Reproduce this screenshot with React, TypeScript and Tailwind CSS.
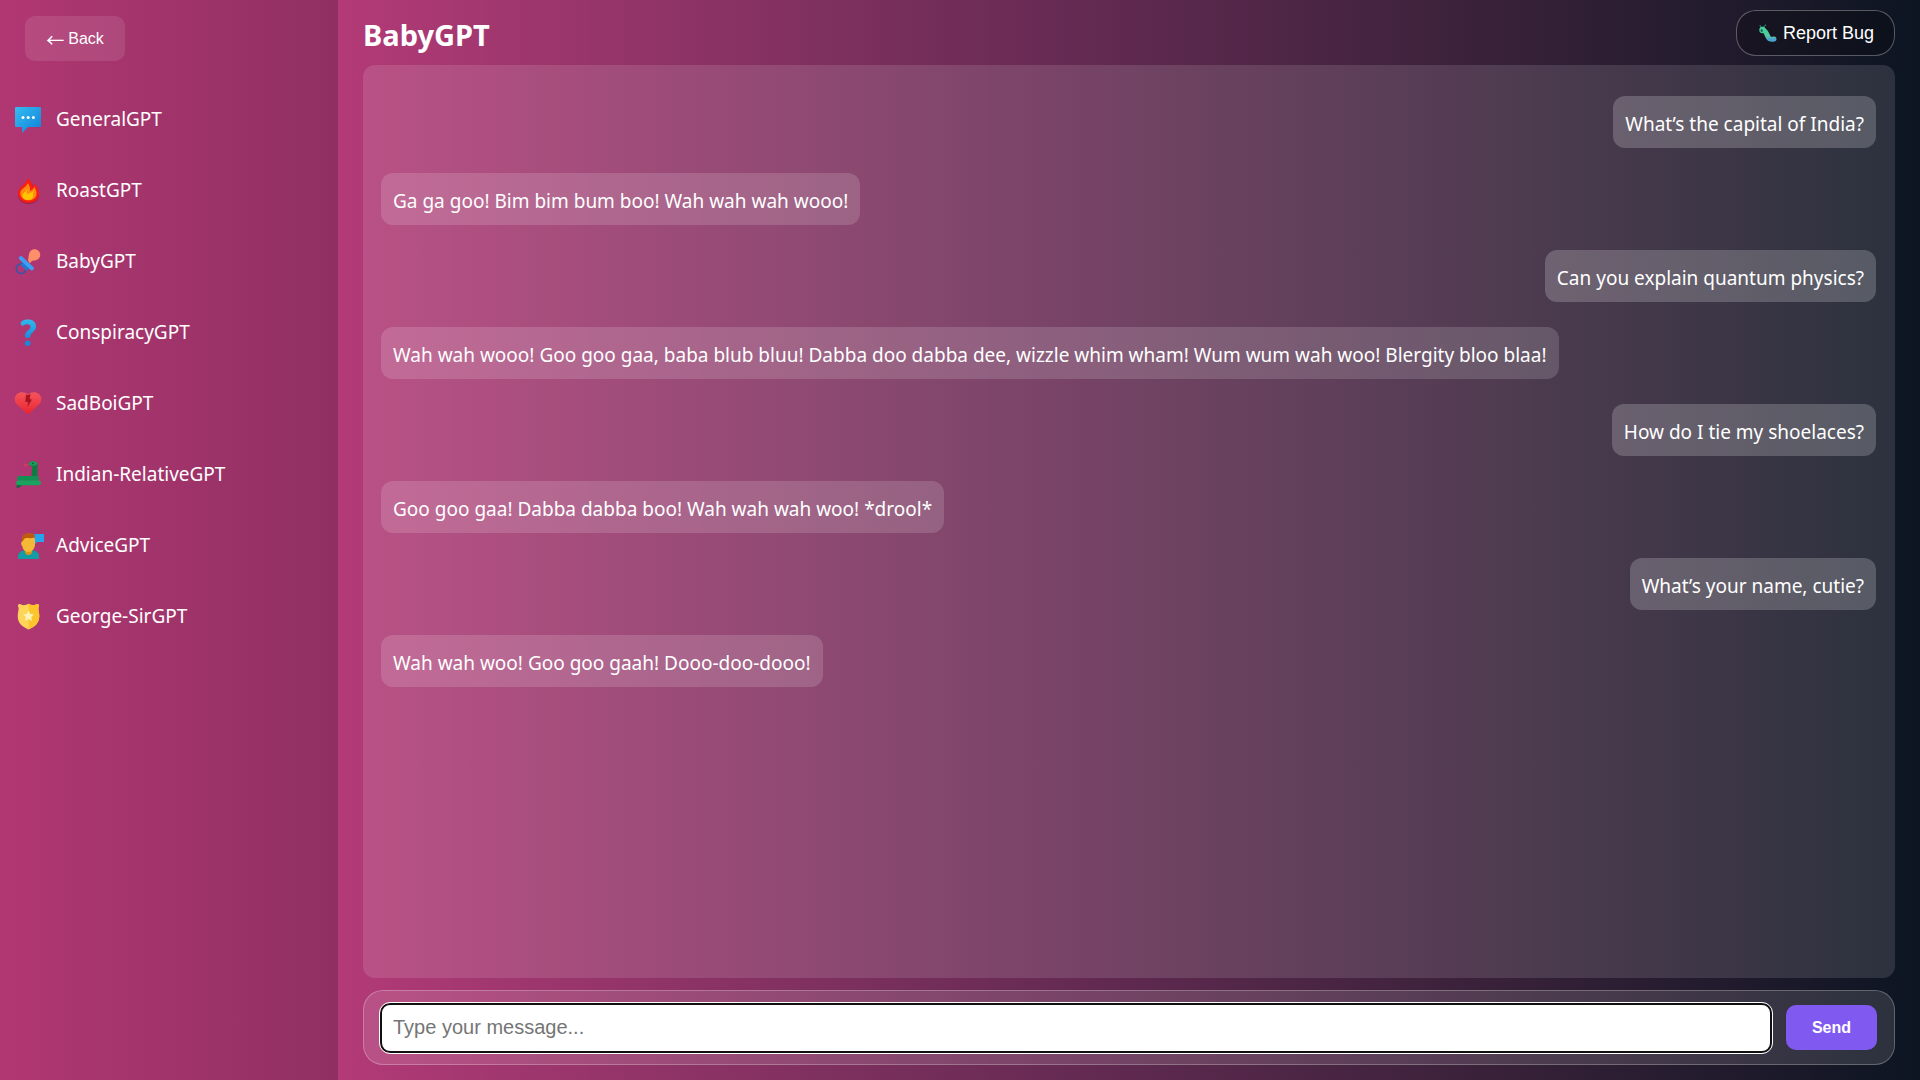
const ui = "font-['Noto_Sans',sans-serif]";
const arial = "font-['Liberation_Sans',sans-serif]";

function ChatIcon() {
  return (
    <svg viewBox="0 0 28 28" className="size-7 shrink-0" aria-hidden="true">
      <defs>
        <linearGradient id="chat" x1="0" y1="0" x2="1" y2="1">
          <stop offset="0" stopColor="#36bdf0" />
          <stop offset="1" stopColor="#0f80da" />
        </linearGradient>
      </defs>
      <path d="M2 1h24a1 1 0 0 1 1 1v18a1 1 0 0 1-1 1H14l-5.500 5.500Q8 27 8 26v-5H2a1 1 0 0 1-1-1V2a1 1 0 0 1 1-1z" fill="url(#chat)" />
      <circle cx="9" cy="11.500" r="1.500" fill="#fff" />
      <circle cx="14.200" cy="11.500" r="1.500" fill="#fff" />
      <circle cx="19.400" cy="11.500" r="1.500" fill="#fff" />
    </svg>
  );
}

function FireIcon() {
  return (
    <svg viewBox="0 0 28 28" className="size-7 shrink-0" aria-hidden="true">
      <path d="M14 2c-1 5-10 8-10 15 0 6.500 4.700 10 10.500 10S25 23.500 25 17z" fill="#8d2347" />
      <path d="M14 .5c1 2.200 3.700 4.300 4.300 8 .5 1 1 .8 1.500.2.700-.8 1.200-1.700 1.700-2.700.5 3.500 3.500 6 3.500 10.500 0 5.700-4.500 9.500-10.500 9.500S4 22 4 16C4 9.500 12.500 8 14 .5z" fill="#fb1d14" />
      <path d="M13.700 6c2 2.700 2.800 5 2.300 8 2-.7 3.800-2.500 4.500-4.500.8 2 2 4 2 7 0 4-3.500 7-8 7S6.300 20.500 6.300 16c0-4.500 6.400-5.500 7.400-10z" fill="#ff8a12" />
      <path d="M13.500 11c0 2-1 3.500-1 5 .7 1 2 .8 3.500 0 1.500-.5 3-1.500 3.800-3 0 2-.5 3-1 4 1 2 .2 4-1.300 5-3 1.700-7.500 1-8.700-2-1.500-3.700 4.200-5.500 4.700-9z" fill="#ffc400" />
    </svg>
  );
}

function PacifierIcon() {
  return (
    <svg viewBox="0 0 28 28" className="size-7 shrink-0" aria-hidden="true">
      <circle cx="7.200" cy="20.600" r="4.900" fill="none" stroke="#3157a8" strokeWidth="1.500" />
      <path d="M6.500 16.500l4-3 5.500 5-3.500 4.500z" fill="#2377d2" />
      <path d="M14 12c1-2 0-7 3-9.500 3.500-3 9.500-.5 9.200 4.500-.2 4-4 5.500-6.500 5.500-2 0-3 1.500-4 3z" fill="#ff8f69" />
      <path d="M6.800 10L18 20.500" stroke="#3aa0f5" strokeWidth="3.800" strokeLinecap="round" />
    </svg>
  );
}

function QuestionIcon() {
  return (
    <svg viewBox="0 0 28 28" className="size-7 shrink-0" aria-hidden="true">
      <defs>
        <linearGradient id="question" x1="0" y1="0" x2="0" y2="1">
          <stop offset="0" stopColor="#31b9ee" />
          <stop offset="1" stopColor="#178fdf" />
        </linearGradient>
      </defs>
      <path d="M7 3C9 1 11.500.5 14 .5c5 0 8 2.700 8 7 0 5-5.700 6.300-5.700 9.500 0 1.500-.8 2-2.500 2s-2.800-.6-2.800-2.300c0-4.700 5.500-5.500 5.500-8.700 0-1.800-1.300-2.700-3.200-2.700-1.500 0-2.800.5-3.800 1.200C7.500 7.500 6 5 7 3z" fill="url(#question)" />
      <circle cx="13.700" cy="24.300" r="2.700" fill="#168bdc" />
    </svg>
  );
}

function BrokenHeartIcon() {
  return (
    <svg viewBox="0 0 28 28" className="size-7 shrink-0" aria-hidden="true">
      <defs>
        <linearGradient id="heart" x1="0" y1="0" x2="0" y2="1">
          <stop offset="0" stopColor="#f5555d" />
          <stop offset="1" stopColor="#e82430" />
        </linearGradient>
      </defs>
      <path d="M14 4.500C17 1.500 22 1.500 25 4c3.200 3 3 7.500 0 10.500l-10 9.300q-1 .9-2 0l-10-9.300C0 11.500-.2 7 3 4 6 1.500 11 1.500 14 4.500z" fill="url(#heart)" />
      <path d="M12 4.500l2 .7 2.500-1.500-.8 5.500 2.300.3L13.500 17l.5-5h-2.700z" fill="#a91420" />
    </svg>
  );
}

function SnakeIcon() {
  return (
    <svg viewBox="0 0 28 28" className="size-7 shrink-0" aria-hidden="true">
      <path d="M15 4h-3m0 0l-2-1m2 1l-1.500 2" stroke="#e33c59" strokeWidth="1" fill="none" />
      <path d="M14.500 3C15.500 1 17.500.5 20 .5c2.500 0 3.500 1.500 3.500 3.500V17h-6l.7-12C17 5 15.500 4.500 14.500 3z" fill="#0d7b42" />
      <path d="M14.500 3C15.500 1 17.500.5 20 .5c2 0 3.300 1 3.400 2.500-2.400 2-6 2.500-8.900 0z" fill="#15a25a" />
      <circle cx="19" cy="2.500" r=".8" fill="#14482f" />
      <path d="M5 21h8l-2 2-3 1.500-3 2-2.500.5.5-3z" fill="#0a6938" />
      <rect x="3" y="15" width="22" height="4.800" rx="2.400" fill="#119253" />
      <rect x="2" y="19.500" width="25" height="4.800" rx="2.400" fill="#18a45e" />
    </svg>
  );
}

function SpeakerIcon() {
  return (
    <svg viewBox="0 0 28 28" className="size-7 shrink-0 overflow-visible" aria-hidden="true">
      <path d="M20 2h10v8h-7l-3.500 3.500z" fill="#27a4ee" />
      <path d="M4 26v-1.500C4 20 8 18 14.500 18S25 20 25 24.500V26q0 1-1 1H5q-1 0-1-1z" fill="#149ca4" />
      <path d="M11 16h7v4c0 2-1.500 3-3.500 3S11 22 11 20z" fill="#d8951c" />
      <path d="M8 9c0-5 2.500-7 6.500-7S21 4 21 9v3c0 4.500-3 8-6.500 8S8.500 17 8.300 14C7 13.500 6.700 11 8 9z" fill="#f6b935" />
      <path d="M8 10c-.7-3-.3-5.500 2-7.500 2-2 7-2 9-.7 2 1.200 2.500 2.400 1.500 3.900-3 .8-6 .3-9 .3-1.500 1-2.500 2.500-3.500 4z" fill="#bd5c10" />
    </svg>
  );
}

function BadgeIcon() {
  return (
    <svg viewBox="0 0 28 28" className="size-7 shrink-0" aria-hidden="true">
      <path d="M4.500 1.500c1-.8 2-.6 3 .2 2 1 5 .3 7-.9 2 1.200 5 1.900 7 .9 1-.8 2-1 3-.2s.6 1.800 0 2.700c-.5 3 .9 5.500.8 8.800C25.100 20 21.500 23.500 14.500 26.500 7.500 23.500 3.900 20 3.700 13 3.600 9.700 5 7.200 4.500 4.200c-.6-.9-1-1.900 0-2.700z" fill="#ffd559" />
      <path d="M14.500 .8c2 1.200 5 1.900 7 .9 1-.8 2-1 3-.2s.6 1.800 0 2.700c-.5 3 .9 5.500.8 8.800C25.100 20 21.500 23.500 14.500 26.500z" fill="#fdc52c" />
      <path d="M14.500 7.500l1.700 3.500 3.800.5-2.800 2.600.8 3.900-3.500-2-3.500 2 .8-3.900L9 11.500l3.800-.5z" fill="#fff3b5" />
    </svg>
  );
}

function BugIcon() {
  return (
    <svg viewBox="0 0 18 18" className="size-[18px] shrink-0" aria-hidden="true">
      <defs>
        <linearGradient id="bug" x1="0" y1="0" x2="0" y2="1">
          <stop offset="0" stopColor="#3fd296" />
          <stop offset="0.650" stopColor="#58c7a0" />
          <stop offset="1" stopColor="#4aa3cf" />
        </linearGradient>
      </defs>
      <path d="M3 4L.8 1.200M4 3.500l3-2.800" stroke="#37a989" strokeWidth="1" fill="none" />
      <path d="M4 6.500c4-.5 4 7.500 7 8.500 1.500.5 3 .2 4 0" stroke="url(#bug)" strokeWidth="5" strokeLinecap="round" fill="none" />
      <circle cx="3.500" cy="6" r="3.200" fill="#49cf9a" />
      <ellipse cx="2.700" cy="6.600" rx="1.100" ry="1.600" fill="#26615f" />
    </svg>
  );
}

const bots = [
  { name: "GeneralGPT", Icon: ChatIcon },
  { name: "RoastGPT", Icon: FireIcon },
  { name: "BabyGPT", Icon: PacifierIcon },
  { name: "ConspiracyGPT", Icon: QuestionIcon },
  { name: "SadBoiGPT", Icon: BrokenHeartIcon },
  { name: "Indian-RelativeGPT", Icon: SnakeIcon },
  { name: "AdviceGPT", Icon: SpeakerIcon },
  { name: "George-SirGPT", Icon: BadgeIcon },
];

const messages = [
  { mine: true, text: "What’s the capital of India?" },
  { mine: false, text: "Ga ga goo! Bim bim bum boo! Wah wah wah wooo!" },
  { mine: true, text: "Can you explain quantum physics?" },
  { mine: false, text: "Wah wah wooo! Goo goo gaa, baba blub bluu! Dabba doo dabba dee, wizzle whim wham! Wum wum wah woo! Blergity bloo blaa!" },
  { mine: true, text: "How do I tie my shoelaces?" },
  { mine: false, text: "Goo goo gaa! Dabba dabba boo! Wah wah wah woo! *drool*" },
  { mine: true, text: "What’s your name, cutie?" },
  { mine: false, text: "Wah wah woo! Goo goo gaah! Dooo-doo-dooo!" },
];

export default function App() {
  return (
    <div className={`flex h-screen text-white ${ui}`}>
      <aside className="w-[338px] shrink-0 bg-linear-to-r from-[#b13773] to-[#903062] py-4">
        <button type="button" className={`ml-[25px] flex h-[45px] w-[100px] items-center justify-center gap-1 rounded-[10px] bg-white/10 text-base ${arial}`}>
          <span className="font-['Noto_Sans_CJK_JP',sans-serif] text-lg leading-none">←</span>
          Back
        </button>
        <nav className="mt-[23px]">
          <ul>
            {bots.map(({ name, Icon }) => (
              <li key={name}>
                <a href={`#${name}`} className="flex h-[71px] items-center gap-[14px] px-[14px] text-[19px]">
                  <Icon />
                  {name}
                </a>
              </li>
            ))}
          </ul>
        </nav>
      </aside>
      <main className="flex min-w-0 flex-1 flex-col bg-linear-to-r from-[#b33a77] from-0% via-[#642a52] via-47% to-[#0c1522] px-[25px] pb-[15px]">
        <header className="flex h-[65px] shrink-0 items-center justify-between">
          <h1 className="pt-1 text-[29px] leading-none font-bold">BabyGPT</h1>
          <button type="button" className={`flex h-[46px] items-center gap-1.5 rounded-[20px] border border-white/30 bg-black/20 pr-5 pl-[22px] text-lg ${arial}`}>
            <BugIcon />
            Report Bug
          </button>
        </header>
        <section className="flex min-h-0 flex-1 flex-col gap-[25px] rounded-xl bg-white/12 pt-[31px] pr-[19px] pl-[18px]" aria-label="Conversation">
          {messages.map((m) => (
            <p
              key={m.text}
              className={
                m.mine
                  ? "flex h-[52px] items-center self-end rounded-xl bg-white/20 px-3 pt-1 text-[19px]"
                  : "flex h-[52px] items-center self-start rounded-xl bg-white/15 px-3 pt-1 text-[19px]"
              }
            >
              {m.text}
            </p>
          ))}
        </section>
        <form className="mt-3 flex h-[75px] shrink-0 items-center gap-[14px] rounded-[20px] border border-white/25 bg-white/12 pr-[17px] pl-4">
          <input
            type="text"
            aria-label="Message"
            placeholder="Type your message..."
            className={`h-[50px] min-w-0 flex-1 rounded-[10px] border-2 border-[#101010] bg-white px-[11px] text-xl text-black outline outline-white placeholder:text-[#757575] ${arial}`}
          />
          <button type="submit" className={`h-[45px] w-[91px] rounded-[10px] bg-[#805af0] text-base font-bold ${arial}`}>
            Send
          </button>
        </form>
      </main>
    </div>
  );
}
